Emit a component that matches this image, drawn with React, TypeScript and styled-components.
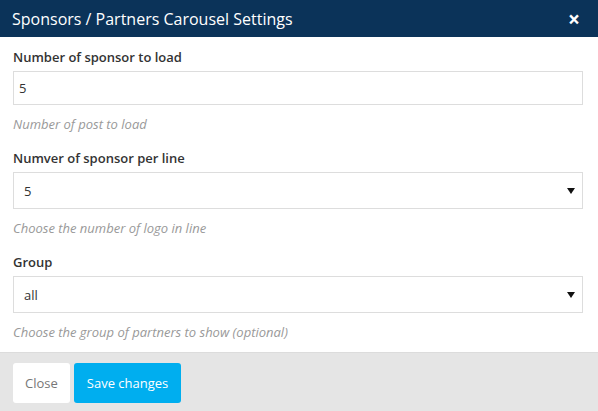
import React from 'react';
import styled, { createGlobalStyle } from 'styled-components';

const GlobalStyle = createGlobalStyle`
    html, body {
        margin: 0;
        padding: 0;
        background: #ffffff;
    }
    body {
        font-family: "Open Sans", "Liberation Sans", Arial, sans-serif;
        color: #333333;
    }
`;

const Modal = styled.section`
    width: 598px;
    height: 411px;
    display: flex;
    flex-direction: column;
    background: #ffffff;
    overflow: hidden;
`;

const Header = styled.header`
    flex-shrink: 0;
    height: 37px;
    display: flex;
    align-items: center;
    justify-content: space-between;
    padding: 0 18px 0 12px;
    background: #0b3359;
    color: #ffffff;
    box-sizing: border-box;
`;

const Title = styled.h4`
    margin: 0;
    font-size: 16px;
    font-weight: 400;
    line-height: 20px;
`;

const CloseX = styled.button`
    border: 0;
    background: none;
    padding: 0;
    color: #ffffff;
    font-family: "Open Sans", sans-serif;
    font-size: 21px;
    font-weight: 700;
    line-height: 1;
    margin-top: 2px;
    cursor: pointer;
`;

const Body = styled.div`
    flex: 1;
    min-height: 0;
    padding: 11px 15px 0 13px;
`;

const Field = styled.div`
    margin-bottom: 16px;

    &:last-child {
        margin-bottom: 0;
    }
`;

const Label = styled.label`
    display: block;
    font-size: 13px;
    font-weight: 600;
    line-height: 18px;
    color: #333333;
    margin-bottom: 5px;
`;

const Control = styled.div<{ $tall?: boolean }>`
    height: ${p => (p.$tall ? 37 : 34)}px;
    box-sizing: border-box;
    border: 1px solid #dddddd;
    display: flex;
    align-items: center;
    justify-content: space-between;
    padding: 0 7px 0 ${p => (p.$tall ? 10 : 5)}px;
    font-size: 13px;
    color: #333333;
`;

const Caret = styled.span`
    width: 0;
    height: 0;
    border-left: 4px solid transparent;
    border-right: 4px solid transparent;
    border-top: 6px solid #111111;
    margin-top: 1px;
`;

const Help = styled.p`
    margin: 10px 0 0;
    font-size: 13px;
    font-style: italic;
    line-height: 18px;
    color: #999999;
`;

const Footer = styled.footer`
    flex-shrink: 0;
    height: 59px;
    box-sizing: border-box;
    background: #e5e5e5;
    border-top: 1px solid #dcdcdc;
    display: flex;
    align-items: flex-start;
    gap: 4px;
    padding: 10px 13px 0;
`;

const Btn = styled.button<{ $primary?: boolean }>`
    height: 40px;
    border: 0;
    border-radius: 3px;
    padding: 0 ${p => (p.$primary ? 13 : 12)}px;
    font-family: "Open Sans", sans-serif;
    font-size: 13px;
    background: ${p => (p.$primary ? '#00aeef' : '#ffffff')};
    color: ${p => (p.$primary ? '#ffffff' : '#777777')};
    cursor: pointer;
`;

export default function App() {
    return (
        <>
            <GlobalStyle />
            <Modal>
                <Header>
                    <Title>Sponsors / Partners Carousel Settings</Title>
                    <CloseX>×</CloseX>
                </Header>
                <Body>
                    <Field>
                        <Label>Number of sponsor to load</Label>
                        <Control>5</Control>
                        <Help>Number of post to load</Help>
                    </Field>
                    <Field>
                        <Label>Numver of sponsor per line</Label>
                        <Control $tall>
                            5<Caret />
                        </Control>
                        <Help>Choose the number of logo in line</Help>
                    </Field>
                    <Field>
                        <Label>Group</Label>
                        <Control $tall>
                            all<Caret />
                        </Control>
                        <Help>Choose the group of partners to show (optional)</Help>
                    </Field>
                </Body>
                <Footer>
                    <Btn>Close</Btn>
                    <Btn $primary>Save changes</Btn>
                </Footer>
            </Modal>
        </>
    );
}
